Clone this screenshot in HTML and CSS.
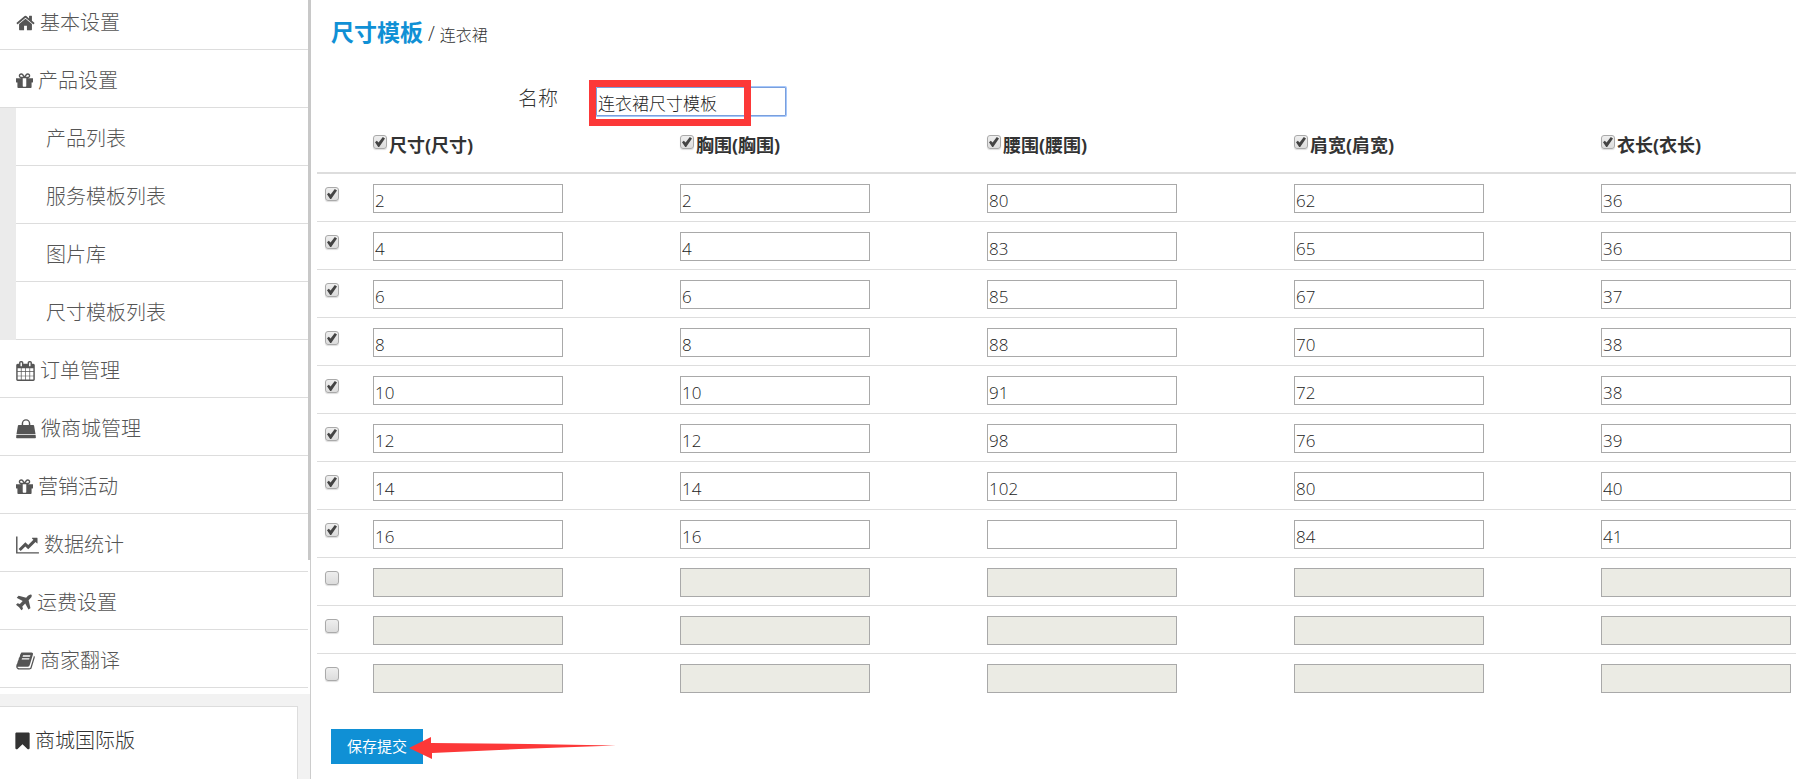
FILE: index.html
```
<!DOCTYPE html>
<html lang="zh-CN">
<head>
	<meta charset="utf-8">
	<title>尺寸模板</title>
	<link rel="stylesheet" href="styles.css">
</head>
<body>
<div class="sidebar">
	<ul class="nav">
		<li><a href="#"><svg width="19" height="20" viewBox="64 0 1664 1792"><path d="M1472 992v480q0 26-19 45t-45 19h-384v-384h-256v384h-384q-26 0-45-19t-19-45v-480q0-1 .5-3t.5-3l575-474 575 474q1 2 1 6zm223-69l-62 74q-8 9-21 11h-3q-13 0-21-7l-692-577-692 577q-12 8-24 7-13-2-21-11l-62-74q-8-10-7-23.5t11-21.5l719-599q32-26 76-26t76 26l244 204v-195q0-14 9-23t23-9h192q14 0 23 9t9 23v408l219 182q10 8 11 21.5t-7 23.5z"/></svg>基本设置</a></li>
		<li><a href="#"><svg width="17" height="20" viewBox="128 0 1536 1792"><path d="M1056 1356v-716h-320v716q0 25 18 38.5t46 13.5h192q28 0 46-13.5t18-38.5zm-456-844h195l-126-161q-26-31-69-31-40 0-68 28t-28 68 28 68 68 28zm688-96q0-40-28-68t-68-28q-43 0-69 31l-125 161h194q40 0 68-28t28-68zm376 256v320q0 14-9 23t-23 9h-96v416q0 40-28 68t-68 28h-1088q-40 0-68-28t-28-68v-416h-96q-14 0-23-9t-9-23v-320q0-14 9-23t23-9h440q-93 0-158.5-65.5t-65.5-158.5 65.5-158.5 158.5-65.5q107 0 168 77l128 165 128-165q61-77 168-77 93 0 158.5 65.5t65.5 158.5-65.5 158.5-158.5 65.5h440q14 0 23 9t9 23z"/></svg>产品设置</a>
			<ul class="subnav">
				<li><a href="#">产品列表</a></li>
				<li><a href="#">服务模板列表</a></li>
				<li><a href="#">图片库</a></li>
				<li><a href="#">尺寸模板列表</a></li>
			</ul>
		</li>
		<li><a href="#"><svg width="19" height="20" viewBox="64 0 1664 1792"><path d="M192 1664h288v-288h-288v288zm352 0h320v-288h-320v288zm-352-352h288v-320h-288v320zm352 0h320v-320h-320v320zm-352-384h288v-288h-288v288zm736 736h320v-288h-320v288zm-384-736h320v-288h-320v288zm768 736h288v-288h-288v288zm-384-352h320v-320h-320v320zm-352-864v-288q0-13-9.5-22.5t-22.5-9.5h-64q-13 0-22.5 9.5t-9.5 22.5v288q0 13 9.5 22.5t22.5 9.5h64q13 0 22.5-9.5t9.5-22.5zm736 864h288v-320h-288v320zm-384-384h320v-288h-320v288zm384 0h288v-288h-288v288zm32-480v-288q0-13-9.5-22.5t-22.5-9.5h-64q-13 0-22.5 9.5t-9.5 22.5v288q0 13 9.5 22.5t22.5 9.5h64q13 0 22.5-9.5t9.5-22.5zm384-64v1280q0 52-38 90t-90 38h-1408q-52 0-90-38t-38-90v-1280q0-52 38-90t90-38h128v-96q0-66 47-113t113-47h64q66 0 113 47t47 113v96h384v-96q0-66 47-113t113-47h64q66 0 113 47t47 113v96h128q52 0 90 38t38 90z"/></svg>订单管理</a></li>
		<li><a href="#"><svg width="20" height="20" viewBox="0 0 1792 1792"><path d="M35 1430h1722l25 230q0 68-64 68H76q-64 0-64-68zM240 540h1312q60 0 70 60l130 760H40l130-760q10-60 70-60z"/><path fill="none" stroke="currentColor" stroke-width="130" d="M576 700V400a320 320 0 0 1 640 0V700"/></svg>微商城管理</a></li>
		<li><a href="#"><svg width="17" height="20" viewBox="128 0 1536 1792"><path d="M1056 1356v-716h-320v716q0 25 18 38.5t46 13.5h192q28 0 46-13.5t18-38.5zm-456-844h195l-126-161q-26-31-69-31-40 0-68 28t-28 68 28 68 68 28zm688-96q0-40-28-68t-68-28q-43 0-69 31l-125 161h194q40 0 68-28t28-68zm376 256v320q0 14-9 23t-23 9h-96v416q0 40-28 68t-68 28h-1088q-40 0-68-28t-28-68v-416h-96q-14 0-23-9t-9-23v-320q0-14 9-23t23-9h440q-93 0-158.5-65.5t-65.5-158.5 65.5-158.5 158.5-65.5q107 0 168 77l128 165 128-165q61-77 168-77 93 0 158.5 65.5t65.5 158.5-65.5 158.5-158.5 65.5h440q14 0 23 9t9 23z"/></svg>营销活动</a></li>
		<li><a href="#"><svg width="23" height="20" viewBox="0 0 2048 1792"><path d="M2048 1536v128H0V128h128v1408h1920zM1920 288v435q0 21-19.500 29.500T1865 745l-121-121-633 633q-10 10-23 10t-23-10L832 1024l-416 416-192-192 585-585q10-10 23-10t23 10l233 233 464-464-121-121q-16-16-7.500-35.500T1453 256h435q14 0 23 9t9 23z"/></svg>数据统计</a></li>
		<li><a href="#"><svg width="16" height="20" viewBox="192 0 1408 1792"><path d="M1568 160q44 52 12 148t-108 172l-161 161 160 696q5 19-12 33l-128 96q-7 6-19 6-4 0-7-1-15-3-21-16l-279-508-259 259 53 194q5 17-8 31l-96 96q-9 9-23 9h-2q-15-2-24-13l-189-252-252-189q-11-7-13-23-1-13 9-25l96-97q9-9 23-9 6 0 8 1l194 53 259-259-508-279q-14-8-17-24-2-16 9-27l128-128q14-13 30-8l665 159 160-160q76-76 172-108t148 12z"/></svg>运费设置</a></li>
		<li><a href="#"><svg width="19" height="20" viewBox="64 0 1664 1792"><path d="M1703 478q40 57 18 129l-275 906q-19 64-76.5 107.5t-122.5 43.5h-923q-77 0-148.5-53.5t-99.5-131.5q-24-67-2-127 0-4 3-27t4-37q1-8-3-21.5t-3-19.5q2-11 8-21t16.5-23.5 16.5-23.5q23-38 45-91.5t30-91.5q3-10 .5-30t-.5-28q3-11 17-28t17-23q21-36 42-92t25-90q1-9-2.5-32t.5-28q4-13 22-30.5t22-22.5q19-26 42.5-84.5t27.5-96.5q1-8-3-25.5t-2-26.5q2-8 9-18t18-23 17-21q8-12 16.5-30.5t15-35 16-36 19.5-32 26.5-23.5 36-11.5 47.5 5.5l-1 3q38-9 51-9h761q74 0 114 56t18 130l-274 906q-36 119-71.5 153.5t-128.5 34.5h-869q-27 0-38 15-11 16-1 43 24 70 144 70h923q29 0 56-15.5t35-41.5l300-987q7-22 5-57 38 15 59 43zm-1064 2q-4 13 2 22.5t20 9.5h608q13 0 25.5-9.5t16.5-22.5l21-64q4-13-2-22.5t-20-9.5h-608q-13 0-25.5 9.5t-16.5 22.5zm-83 256q-4 13 2 22.5t20 9.5h608q13 0 25.5-9.5t16.5-22.5l21-64q4-13-2-22.5t-20-9.5h-608q-13 0-25.5 9.5t-16.5 22.5z"/></svg>商家翻译</a></li>
	</ul>
	<div class="scrollbar"></div>
	<div class="site">
		<a href="#"><svg width="15" height="20" viewBox="256 0 1280 1792"><path d="M1420 128q23 0 44 9 33 13 52.5 41t19.5 62v1289q0 34-19.5 62t-52.5 41q-19 8-44 8-48 0-83-32l-441-424-441 424q-36 33-83 33-23 0-44-9-33-13-52.5-41t-19.5-62v-1289q0-34 19.5-62t52.5-41q21-9 44-9h1048z"/></svg>商城国际版</a>
	</div>
</div>
<form class="main">
	<h1 class="title"><a href="#">尺寸模板</a><span class="slash">/</span><small>连衣裙</small></h1>
	<div class="field">
		<label for="name">名称</label>
		<div class="field-box">
			<input type="text" id="name" class="text name" value="连衣裙尺寸模板">
			<span class="mark"></span>
		</div>
	</div>
	<table class="sizes">
		<colgroup><col class="col-check"><col><col><col><col><col class="col-last"></colgroup>
		<thead>
			<tr>
				<td></td>
				<th><label><input type="checkbox" checked>尺寸(尺寸)</label></th>
				<th><label><input type="checkbox" checked>胸围(胸围)</label></th>
				<th><label><input type="checkbox" checked>腰围(腰围)</label></th>
				<th><label><input type="checkbox" checked>肩宽(肩宽)</label></th>
				<th><label><input type="checkbox" checked>衣长(衣长)</label></th>
			</tr>
		</thead>
		<tbody>
			<tr>
				<td><input type="checkbox" aria-label="第1行" checked></td>
				<td><input type="text" class="text" aria-label="尺寸" value="2"></td>
				<td><input type="text" class="text" aria-label="胸围" value="2"></td>
				<td><input type="text" class="text" aria-label="腰围" value="80"></td>
				<td><input type="text" class="text" aria-label="肩宽" value="62"></td>
				<td><input type="text" class="text" aria-label="衣长" value="36"></td>
			</tr>
			<tr>
				<td><input type="checkbox" aria-label="第2行" checked></td>
				<td><input type="text" class="text" aria-label="尺寸" value="4"></td>
				<td><input type="text" class="text" aria-label="胸围" value="4"></td>
				<td><input type="text" class="text" aria-label="腰围" value="83"></td>
				<td><input type="text" class="text" aria-label="肩宽" value="65"></td>
				<td><input type="text" class="text" aria-label="衣长" value="36"></td>
			</tr>
			<tr>
				<td><input type="checkbox" aria-label="第3行" checked></td>
				<td><input type="text" class="text" aria-label="尺寸" value="6"></td>
				<td><input type="text" class="text" aria-label="胸围" value="6"></td>
				<td><input type="text" class="text" aria-label="腰围" value="85"></td>
				<td><input type="text" class="text" aria-label="肩宽" value="67"></td>
				<td><input type="text" class="text" aria-label="衣长" value="37"></td>
			</tr>
			<tr>
				<td><input type="checkbox" aria-label="第4行" checked></td>
				<td><input type="text" class="text" aria-label="尺寸" value="8"></td>
				<td><input type="text" class="text" aria-label="胸围" value="8"></td>
				<td><input type="text" class="text" aria-label="腰围" value="88"></td>
				<td><input type="text" class="text" aria-label="肩宽" value="70"></td>
				<td><input type="text" class="text" aria-label="衣长" value="38"></td>
			</tr>
			<tr>
				<td><input type="checkbox" aria-label="第5行" checked></td>
				<td><input type="text" class="text" aria-label="尺寸" value="10"></td>
				<td><input type="text" class="text" aria-label="胸围" value="10"></td>
				<td><input type="text" class="text" aria-label="腰围" value="91"></td>
				<td><input type="text" class="text" aria-label="肩宽" value="72"></td>
				<td><input type="text" class="text" aria-label="衣长" value="38"></td>
			</tr>
			<tr>
				<td><input type="checkbox" aria-label="第6行" checked></td>
				<td><input type="text" class="text" aria-label="尺寸" value="12"></td>
				<td><input type="text" class="text" aria-label="胸围" value="12"></td>
				<td><input type="text" class="text" aria-label="腰围" value="98"></td>
				<td><input type="text" class="text" aria-label="肩宽" value="76"></td>
				<td><input type="text" class="text" aria-label="衣长" value="39"></td>
			</tr>
			<tr>
				<td><input type="checkbox" aria-label="第7行" checked></td>
				<td><input type="text" class="text" aria-label="尺寸" value="14"></td>
				<td><input type="text" class="text" aria-label="胸围" value="14"></td>
				<td><input type="text" class="text" aria-label="腰围" value="102"></td>
				<td><input type="text" class="text" aria-label="肩宽" value="80"></td>
				<td><input type="text" class="text" aria-label="衣长" value="40"></td>
			</tr>
			<tr>
				<td><input type="checkbox" aria-label="第8行" checked></td>
				<td><input type="text" class="text" aria-label="尺寸" value="16"></td>
				<td><input type="text" class="text" aria-label="胸围" value="16"></td>
				<td><input type="text" class="text" aria-label="腰围" value=""></td>
				<td><input type="text" class="text" aria-label="肩宽" value="84"></td>
				<td><input type="text" class="text" aria-label="衣长" value="41"></td>
			</tr>
			<tr>
				<td><input type="checkbox" aria-label="第9行"></td>
				<td><input type="text" class="text" aria-label="尺寸" disabled></td>
				<td><input type="text" class="text" aria-label="胸围" disabled></td>
				<td><input type="text" class="text" aria-label="腰围" disabled></td>
				<td><input type="text" class="text" aria-label="肩宽" disabled></td>
				<td><input type="text" class="text" aria-label="衣长" disabled></td>
			</tr>
			<tr>
				<td><input type="checkbox" aria-label="第10行"></td>
				<td><input type="text" class="text" aria-label="尺寸" disabled></td>
				<td><input type="text" class="text" aria-label="胸围" disabled></td>
				<td><input type="text" class="text" aria-label="腰围" disabled></td>
				<td><input type="text" class="text" aria-label="肩宽" disabled></td>
				<td><input type="text" class="text" aria-label="衣长" disabled></td>
			</tr>
			<tr>
				<td><input type="checkbox" aria-label="第11行"></td>
				<td><input type="text" class="text" aria-label="尺寸" disabled></td>
				<td><input type="text" class="text" aria-label="胸围" disabled></td>
				<td><input type="text" class="text" aria-label="腰围" disabled></td>
				<td><input type="text" class="text" aria-label="肩宽" disabled></td>
				<td><input type="text" class="text" aria-label="衣长" disabled></td>
			</tr>
		</tbody>
	</table>
	<div class="actions">
		<button type="button" class="save">保存提交</button>
		<svg class="arrow" width="208" height="22" viewBox="0 0 208 22"><path d="M0 11L22 0V6L120 7L207 8.500L110 12L23 16V22Z"/></svg>
	</div>
</form>
</body>
</html>
```

FILE: styles.css
```
*{box-sizing:border-box;}
html,body{height:100%;overflow:hidden;}
body,ul,h1{margin:0;padding:0;}
body{display:flex;color:#333;background:#fff;font:300 18px/24px "Open Sans","Noto Sans CJK SC",sans-serif;}
ul{list-style:none;}
a{color:inherit;text-decoration:none;}
svg{fill:currentColor;flex:none;}

/* 左侧菜单 */
.sidebar{position:relative;display:flex;flex-direction:column;flex:none;width:311px;height:100vh;border-right:1px solid #ccc;background:#f2f2f2;font-size:20px;}
.nav{padding:0 2px 6px 0;margin-top:-8px;background:#fff;color:#555;}
.nav a{display:flex;align-items:center;gap:5px;height:58px;padding:5px 0 0 16px;border-bottom:1px solid #ddd;}
.subnav{padding-left:16px;background:#ebebeb;}
.subnav a{padding-left:30px;background:#fff;}
.scrollbar{position:absolute;top:0;right:-1px;width:3px;height:560px;background:#c8c8c8;}
.site{flex:1;margin:12px 12px 0 0;padding:22px 0 0 15px;border:1px solid #ddd;border-width:1px 1px 0 0;background:#fff;}
.site a{display:flex;align-items:center;gap:5px;}

/* 右侧内容 */
.main{flex:1;min-width:0;padding:18px 0 0 6px;}
.title{display:flex;align-items:baseline;gap:5px;padding-left:14px;font-size:20px;font-weight:300;line-height:28px;}
.title a{color:#1090d5;font-size:23px;font-weight:700;}
.title small{font-size:16px;}
.field{display:flex;align-items:flex-start;gap:38px;margin-top:38px;}
.field label{width:241px;text-align:right;font-size:20px;}
.field-box{position:relative;}
.text{display:block;width:190px;height:29px;padding:3px 1px 0;border:1px solid #a9a9a9;border-radius:0;background:#fff;color:#222;font:inherit;font-size:17px;outline:none;}
.text:disabled{background:#ebebe4;}
.name{padding-top:1px;border-color:#7a9fdc;border-radius:1px;box-shadow:0 0 0 1px #a5c7fb;}
.mark{position:absolute;top:-7px;left:-7px;width:162px;height:46px;border:7px solid #fc3838;pointer-events:none;}

.sizes{width:100%;margin-top:14px;border-collapse:separate;border-spacing:0;table-layout:fixed;}
.col-check{width:51px;}
.col-last{width:200px;}
.sizes th,.sizes td{padding:10px 5px 8px;border-bottom:1px solid #ddd;text-align:left;vertical-align:top;font-weight:300;}
.sizes td:first-child{padding:13px 8px 0;}
.sizes thead th,.sizes thead td{height:44px;padding-top:5px;padding-bottom:0;border-bottom-width:2px;font-weight:700;}
.sizes tbody tr:last-child td{border-bottom:0;}
.sizes label{display:flex;gap:2px;line-height:20px;}
input[type=checkbox]{appearance:none;display:block;flex:none;position:relative;width:14px;height:14px;margin:0;border:1px solid #aaa;border-radius:3px;background:linear-gradient(#eee,#dcdcdc);box-shadow:0 1px 1px #ddd;}
input[type=checkbox]:checked::after{content:"";position:absolute;top:1px;left:1px;width:10px;height:10px;background:#444;clip-path:polygon(0 52%,18% 38%,36% 56%,78% 0,100% 16%,42% 100%,32% 100%);}

.actions{position:relative;margin-top:28px;padding-left:14px;}
.save{display:block;width:92px;height:35px;padding:0;border:0;background:#1090d5;color:#fff;font:400 15px/33px "Open Sans","Noto Sans CJK SC",sans-serif;}
.arrow{position:absolute;top:8px;left:92px;color:#fc3838;}
```
